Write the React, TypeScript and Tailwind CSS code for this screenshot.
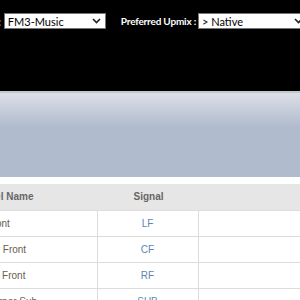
import React from 'react';

const rows = [
  { name: 'Left Front', signal: 'LF', pad: 'pl-[77px]' },
  { name: 'Center Front', signal: 'CF', pad: 'pl-[80px]' },
  { name: 'Right Front', signal: 'RF', pad: 'pl-[86px]' },
  { name: 'Corner Sub', signal: 'SUB', pad: 'pl-[96px]' },
];

const Chevron = () => (
  <svg width="9" height="6" viewBox="0 0 9 6" className="shrink-0">
    <path d="M1 1l3.5 3.5L8 1" fill="none" stroke="#222" strokeWidth="1.6" />
  </svg>
);

const FakeSelect = ({ value, className }: { value: string; className: string }) => (
  <div
    className={`flex h-[16px] shrink-0 items-center justify-between border border-[#767676] bg-white pl-[3px] pr-[4px] text-[11px] text-black ${className}`}
  >
    <span className="leading-none">{value}</span>
    <Chevron />
  </div>
);

export default function App() {
  return (
    <div className="w-[300px] h-[300px] overflow-hidden bg-white font-['Lato',sans-serif]">
      <div className="h-[91px] bg-black">
        <div className="flex items-center pt-[13px] -ml-[2px]">
          <span className="text-[11px] font-bold text-white leading-none">:</span>
          <FakeSelect value="FM3-Music" className="ml-[3px] w-[102px]" />
          <span className="ml-[15px] text-[10px] font-bold tracking-[-0.2px] text-white leading-none whitespace-nowrap">
            Preferred Upmix :
          </span>
          <FakeSelect value="> Native" className="ml-[2px] w-[110px]" />
        </div>
      </div>
      <div className="h-[2px] bg-[#c4c6ca]" />
      <div className="h-[84px] bg-[linear-gradient(to_bottom,#dcdfe7_0px,#b0bbcd_34px,#b0bbcd_100%)]" />
      <div className="pt-[7px] overflow-hidden font-['Liberation_Sans',Arial,sans-serif]">
        <table className="-ml-[110px] w-[418px] table-fixed border-collapse text-[10px]">
          <thead>
            <tr className="h-[26px] bg-[#e6e6e6]">
              <th className="w-[207px] pl-[74px] text-left font-bold text-[#666]">Channel Name</th>
              <th className="w-[101px] pl-[2px] text-center font-bold text-[#666]">Signal</th>
              <th className="w-[110px]"></th>
            </tr>
          </thead>
          <tbody>
            {rows.map((r) => (
              <tr key={r.signal} className="h-[26px] border-t border-[#dcdcdc]">
                <td className={`${r.pad} text-[#6b5d4f] whitespace-nowrap`}>{r.name}</td>
                <td className="border-l border-[#dcdcdc] text-center text-[#5a86b4]">{r.signal}</td>
                <td className="border-l border-[#dcdcdc]"></td>
              </tr>
            ))}
          </tbody>
        </table>
      </div>
    </div>
  );
}
